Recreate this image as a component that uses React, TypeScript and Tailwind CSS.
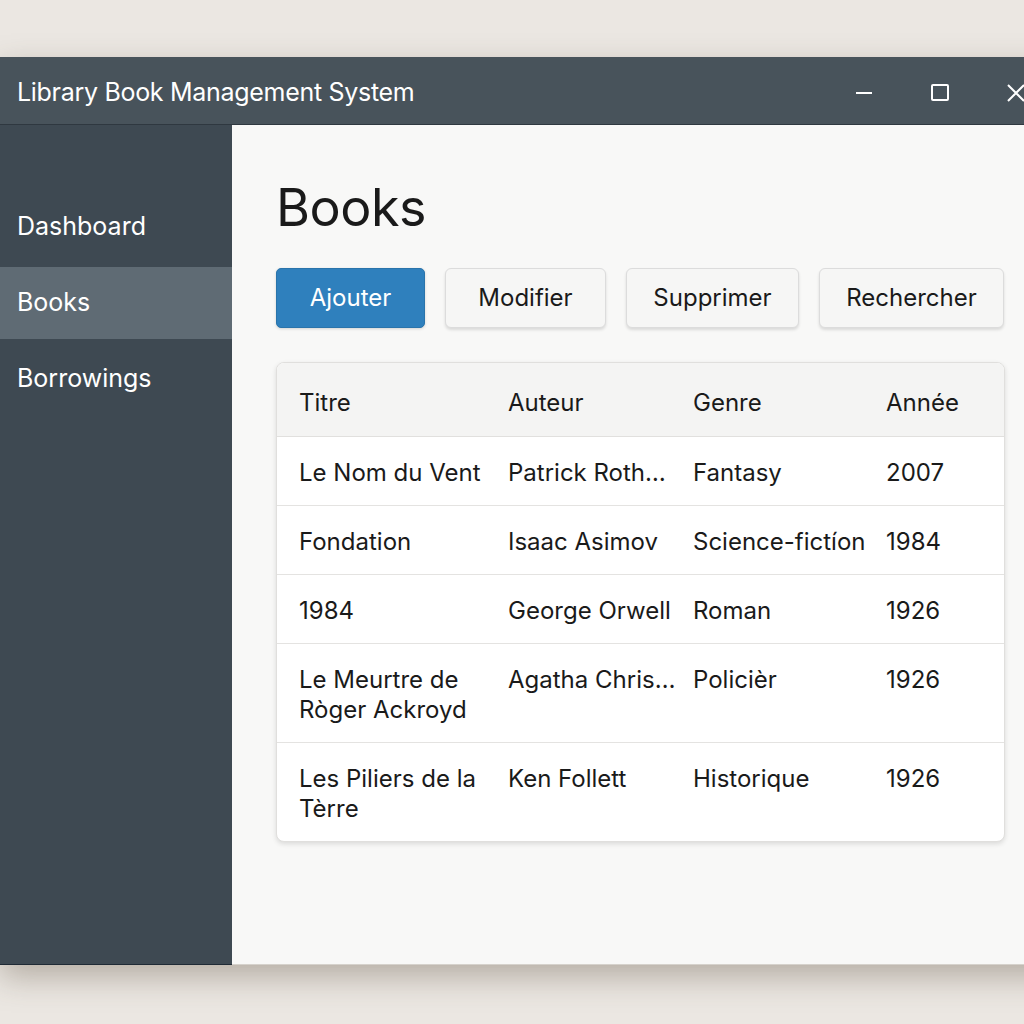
const books = [
  { title: "Le Nom du Vent", author: "Patrick Roth…", genre: "Fantasy", year: "2007" },
  { title: "Fondation", author: "Isaac Asimov", genre: "Science-fictíon", year: "1984" },
  { title: "1984", author: "George Orwell", genre: "Roman", year: "1926" },
  { title: "Le Meurtre de Ròger Ackroyd", author: "Agatha Chris…", genre: "Policièr", year: "1926" },
  { title: "Les Piliers de la Tèrre", author: "Ken Follett", genre: "Historique", year: "1926" },
];

const navItems = ["Dashboard", "Books", "Borrowings"];

const actions = [
  { label: "Modifier", w: "w-[161px]" },
  { label: "Supprimer", w: "w-[173px]" },
  { label: "Rechercher", w: "w-[185px]" },
];

const App = () => {
  return (
    <div
      className="w-screen h-screen overflow-hidden bg-[#ebe7e2] pt-[57px]"
      style={{ fontFamily: "Inter, 'Noto Sans', sans-serif" }}
    >
      <div className="w-[1060px] h-[908px] flex flex-col shadow-[0_12px_30px_rgba(80,65,50,0.35)]">
        {/* title bar */}
        <div className="h-[68px] bg-[#48535b] border-b border-[#2f3840] flex items-center justify-between pl-[17px] pr-[35px] pt-[4px] text-white">
          <div className="text-[25px] tracking-[-0.3px]">Library Book Management System</div>
          <div className="flex items-center">
            <div className="w-[16px] h-[2px] bg-white mr-[59px]" />
            <div className="w-[18px] h-[17px] border-2 border-white rounded-[2px] mr-[58px]" />
            <svg width="18" height="18" viewBox="0 0 18 18">
              <path d="M1 1 L17 17 M17 1 L1 17" stroke="white" strokeWidth="2" />
            </svg>
          </div>
        </div>

        <div className="flex flex-1">
          {/* sidebar */}
          <div className="w-[232px] bg-[#3e4952] pt-[66px] flex flex-col gap-1 border-b border-[#1f2a35]">
            {navItems.map((item) => (
              <div
                key={item}
                className={
                  item === "Books"
                    ? "h-[72px] flex items-center pl-[17px] text-[25px] text-white bg-[#5f6b74]"
                    : "h-[72px] flex items-center pl-[17px] text-[25px] text-white"
                }
              >
                {item}
              </div>
            ))}
          </div>

          {/* content */}
          <div className="flex-1 bg-[#f8f8f7] pl-[44px] pt-[38px] border-b border-[#d6d2cc]">
            <h1 className="text-[52px] text-[#1a1a1a] leading-none tracking-[-0.5px] h-[90px] flex items-center">Books</h1>

            <div className="flex gap-[20px] mt-[15px]">
              <button className="h-[60px] w-[149px] rounded-[5px] bg-[#2f80bd] text-white text-[24px] border border-[#2a74ab] shadow-[0_1px_3px_rgba(0,0,0,0.15)]">
                Ajouter
              </button>
              {actions.map((b) => (
                <button
                  key={b.label}
                  className={`h-[60px] ${b.w} rounded-[6px] bg-[#f6f6f5] text-[#1a1a1a] text-[24px] border border-[#dcdcdc] shadow-[0_2px_3px_rgba(0,0,0,0.12)]`}
                >
                  {b.label}
                </button>
              ))}
            </div>

            {/* table */}
            <div className="mt-[34px] w-[729px] bg-white rounded-[8px] border border-[#e0dfdd] shadow-[0_2px_5px_rgba(0,0,0,0.12)] overflow-hidden text-[24px] text-[#1a1a1a] leading-[30px]">
              <div className="grid grid-cols-[209px_185px_193px_1fr] bg-[#f4f4f3] border-b border-[#e1e0de] pl-[22px] pt-[25px] pb-[18px]">
                <div>Titre</div>
                <div>Auteur</div>
                <div>Genre</div>
                <div>Année</div>
              </div>
              {books.map((b, i) => (
                <div
                  key={b.title}
                  className={
                    i < books.length - 1
                      ? "grid grid-cols-[209px_185px_193px_1fr] border-b border-[#e4e3e1] pl-[22px] pt-[21px] pb-[17px]"
                      : "grid grid-cols-[209px_185px_193px_1fr] pl-[22px] pt-[21px] pb-[17px]"
                  }
                >
                  <div className="pr-[10px]">{b.title}</div>
                  <div className="whitespace-nowrap">{b.author}</div>
                  <div className="whitespace-nowrap">{b.genre}</div>
                  <div>{b.year}</div>
                </div>
              ))}
            </div>
          </div>
        </div>
      </div>
    </div>
  );
};

export default App;
